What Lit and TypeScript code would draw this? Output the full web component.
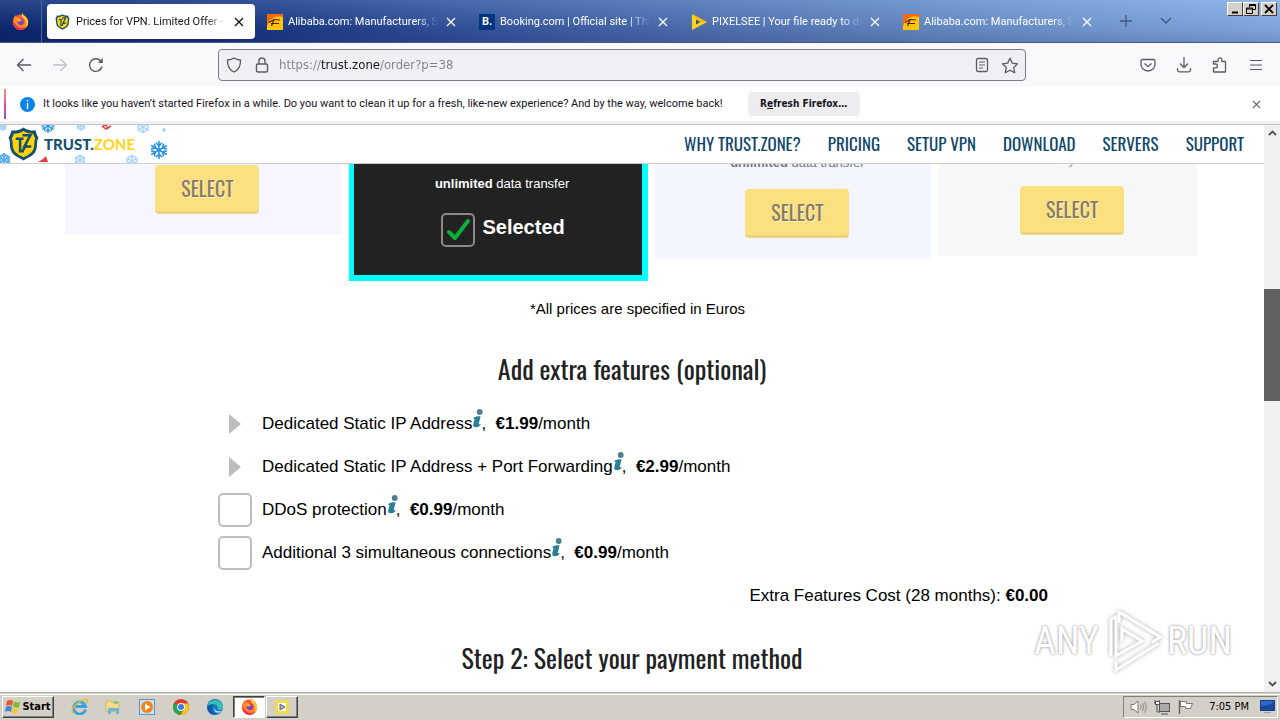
import { LitElement, html, css, svg, nothing } from "lit";
import { customElement } from "lit/decorators.js";
import { classMap } from "lit/directives/class-map.js";

const icon = (w: number, h: number, body: unknown, box = `0 0 ${w} ${h}`) =>
  html`<svg width=${w} height=${h} viewBox=${box} fill="none" aria-hidden="true">${body}</svg>`;

const closeIcon = (s = 10) =>
  icon(s, s, svg`<path d="M1 1 9 9M9 1 1 9" stroke="currentColor" stroke-width="1.3"/>`, "0 0 10 10");

const firefox = (s: number) =>
  icon(s, s, svg`
    <circle cx="8" cy="8.6" r="7.2" fill="#ff4f3a"/>
    <path d="M1.2 7C1.4 4.6 2.6 3 3.6 2.2c0 1 .4 1.6 1 2C6 3.6 7 3.8 8 4.6 6 5 5 6.500 5.200 8.400 5.600 12 10 12.500 11.500 10c1.200-2.200.2-4.200-1.500-5.500C8.500 3 8.800 1.400 9.600.2c.8 1.700 2.600 2.500 3.800 4 1.500 1.700 2 3.800 1.700 5.600-.8 3.800-3.900 6-7.100 6-4 0-7.200-3.200-6.800-8.800z" fill="#ff8a1e"/>
    <path d="M9.600.2c.8 1.700 2.600 2.500 3.800 4 1.500 1.700 2 3.800 1.700 5.600-.3 1.500-1 2.800-2 3.800C14 10 13.500 7 11.500 5.500 9 4 8.800 1.800 9.600.2z" fill="#ffcf3a"/>
    <path d="M1.200 8c.1 5 3.300 7.700 6.800 7.700 2.500 0 4.600-1 5.900-3-2.400 1.900-6.200 2-8.400.2C3.500 11.500 2.700 9.500 1.200 8z" fill="#f5245a"/>
    <circle cx="8.200" cy="8.200" r="2.900" fill="#7a3fd0"/>
    <path d="M4.300 5.800c1.500-.9 3-.6 3.900.2 1 .2 1.700.4 1.800.8-.8.600-2.300.3-2.900 1.500-1.300-.3-2.500-1.200-2.800-2.500z" fill="#ffa52e"/>`,
    "0 0 16 16");

const shieldLogo = (w: number, h: number) =>
  icon(w, h, svg`
    <path d="M16 .5c4 2.800 8.500 3.600 12.500 3 1 4 1.500 5.500 3 7.500-2.500 4-.5 7-2.500 13-2 5.500-7.500 7.500-13 10.500C10.500 31.500 5 29.500 3 24 1 18 3 15 .5 11c1.500-2 2-3.500 3-7.500 4 .6 8.500-.2 12.500-3z" fill="#14506f"/>
    <path d="M16 4c3.500 2.200 6.500 3 10 2.800.4 2 1.200 3.400 2.200 4.800-1.700 3.700-.2 6.500-2 11.400C24.500 27.500 20 29 16 31.300 12 29 7.500 27.500 5.800 23c-1.800-4.900-.3-7.700-2-11.400C4.800 10.200 5.600 8.800 6 6.800 9.500 7 12.500 6.200 16 4z" fill="#ffd20a"/>
    <path d="M8 12h8M12.500 11.500V25h4M15 8.500h8L17 20h7M15.500 24l3.500-6" stroke="#14506f" stroke-width="2.600"/>`,
    "0 0 32 35");

const alibaba = icon(16, 16, svg`
    <path d="M0 0h16v16H0z" fill="#ffc40c"/><path d="M0 0h16v3C10 1 4 3 0 12z" fill="#f26a10"/>
    <path d="M2 8.500 7 5.500l6 .5M4.500 12 7 5.500M4 9.500h8" stroke="#5a1c00" stroke-width="1.200"/>`);

const booking = html`<span class="bk">B.</span>`;

const pixelsee = icon(16, 16, svg`
    <path d="M1 0v16l15-8z" fill="#ffd21c"/><path d="M5 5.500v5l4.500-2.500z" fill="#2e4f92"/><path d="M1 0l15 8H9z" fill="#f3b60e"/>`);

const TABS = [
  { title: "Prices for VPN. Limited Offer - Trust.Zone", fav: shieldLogo(15, 16), active: true },
  { title: "Alibaba.com: Manufacturers, Suppliers", fav: alibaba, active: false },
  { title: "Booking.com | Official site | The best", fav: booking, active: false },
  { title: "PIXELSEE | Your file ready to download", fav: pixelsee, active: false },
  { title: "Alibaba.com: Manufacturers, Suppliers", fav: alibaba, active: false },
];

@customElement("browser-chrome")
class BrowserChrome extends LitElement {
  static styles = css`
    :host { display: block; font: 11px/16px Roboto, "DejaVu Sans Condensed", sans-serif; color: #15141a; }
    button { border: 0; background: none; padding: 0; margin: 0; font: inherit; color: inherit; display: grid; place-items: center; }
    svg { display: block; }
    .tabs { height: 43px; display: flex; box-sizing: border-box;
      background: linear-gradient(rgba(150, 195, 245, .22), rgba(20, 45, 110, .12) 70%, rgba(20, 40, 100, .25)), linear-gradient(90deg, #0a246a, #14307a 17%, #32519a 35%, #5373b3 55%, #7196cd 77%, #8db5e8);
      border-bottom: 1px solid #46598c; }
    .home { width: 42px; box-sizing: border-box; display: grid; place-items: center; border-right: 1px solid #50669c; margin-right: 5px; }
    .strip { display: flex; gap: 4px; padding: 4px 0 3px; min-width: 0; margin-right: 3px; }
    .tab { width: 208px; box-sizing: border-box; display: flex; align-items: center; padding: 0 8px; gap: 5px; color: #fff; border-radius: 4px; min-width: 0; }
    .tab.active { background: #fff; color: #15141a; }
    .fav { width: 16px; flex: none; }
    .bk { display: block; width: 16px; height: 16px; background: #003580; color: #fff; font-weight: bold; text-align: center; }
    .title { flex: 1; white-space: nowrap; overflow: hidden; -webkit-mask-image: linear-gradient(90deg, #000 86%, transparent); mask-image: linear-gradient(90deg, #000 86%, transparent); }
    .close { width: 16px; height: 16px; flex: none; }
    .extra { width: 40px; color: #45557c; }
    .win { margin-left: auto; display: flex; padding: 2px 3px 0 0; align-items: flex-start; }
    .win button { width: 16px; height: 14px; background: #d4d0c8; color: #000; border: 1px solid; border-color: #fff #404040 #404040 #fff; }
    .win button:last-child { margin-left: 2px; }
    .nav { height: 44px; box-sizing: border-box; background: #f9f9fb; display: flex; align-items: center; color: #5b5b66; padding: 0 6px; }
    .nav button { width: 36px; height: 32px; }
    .nav .dim { color: #c0c0c5; }
    .nav .url { flex: 1; margin: 0 104px; display: flex; align-items: center; height: 32px; box-sizing: border-box; border: 1px solid #7c7c88; border-radius: 4px; background: #f0f0f4; padding: 0 1px; }
    .nav .url button { width: 28px; height: 28px; }
    .url input { flex: 1; min-width: 0; border: 0; outline: 0; padding: 0 0 0 3px; height: 20px; font: 13px/20px "DejaVu Sans Condensed", "DejaVu Sans", sans-serif;
      color: transparent; background: linear-gradient(90deg, #80808a 45px, #15141a 45px, #15141a 104px, #80808a 104px); -webkit-background-clip: text; background-clip: text; }
    .note { height: 34px; display: flex; align-items: center; background: #fff; }
    .bar { width: 2px; align-self: stretch; margin: 2px 14px 2px 4px; background: linear-gradient(#f6937a, #e0559b 50%, #8a4fd0); }
    .msg { padding: 0 25px 0 8px; white-space: nowrap; }
    .note .refresh { width: 112px; height: 24px; background: #ededf0; border-radius: 4px; font: bold 10px/24px "DejaVu Sans Condensed", "DejaVu Sans", sans-serif; display: block; }
    .note .x { margin: 0 16px 0 auto; width: 16px; height: 16px; color: #5b5b66; }
    .edge { height: 3px; background: #f0f0f2; border-bottom: 1px solid #c4c4c8; }
  `;
  render() {
    const s = "currentColor";
    return html`
      <div class="tabs">
        <div class="home">${firefox(17)}</div>
        <div class="strip">
          ${TABS.map((t) => html`<div class=${classMap({ tab: true, active: t.active })}>
            <span class="fav">${t.fav}</span><span class="title">${t.title}</span>
            <button class="close" aria-label="Close tab">${closeIcon(10)}</button></div>`)}
        </div>
        <button class="extra" aria-label="New tab">${icon(12, 12, svg`<path d="M6 0v12M0 6h12" stroke=${s} stroke-width="1.300"/>`)}</button>
        <button class="extra" aria-label="List tabs">${icon(12, 8, svg`<path d="m1 1 5 5 5-5" stroke=${s} stroke-width="1.400"/>`)}</button>
        <div class="win">
          <button aria-label="Minimize">${icon(10, 10, svg`<path d="M2 8.500h6" stroke="#000" stroke-width="2"/>`)}</button>
          <button aria-label="Restore">${icon(10, 10, svg`<path d="M3.500 3V.500h6v5H7M3 1.500h7M.500 4h6v5.500h-6zM0 5h7" stroke="#000"/>`)}</button>
          <button aria-label="Close">${icon(10, 10, svg`<path d="m1 1 8 8M9 1 1 9" stroke="#000" stroke-width="1.800"/>`)}</button>
        </div>
      </div>
      <div class="nav">
        <button aria-label="Back">${icon(16, 14, svg`<path d="M15 7H2M7.500 1 1.500 7l6 6" stroke=${s} stroke-width="1.400"/>`)}</button>
        <button class="dim" aria-label="Forward">${icon(16, 14, svg`<path d="M1 7h13M8.500 1l6 6-6 6" stroke=${s} stroke-width="1.400"/>`)}</button>
        <button aria-label="Reload">${icon(16, 16, svg`<path d="M14 9.500A6.300 6.300 0 1 1 12.500 3.800L14 5.300" stroke=${s} stroke-width="1.400"/><path d="M14.800 1v5H9.800z" fill=${s}/>`)}</button>
        <div class="url">
          <button aria-label="Tracking protection">${icon(16, 16, svg`<path d="M8 1c2 1.300 4 1.800 6.500 2 .2 5.500-1.500 9.800-6.500 12C3 12.800 1.300 8.500 1.500 3 4 2.800 6 2.300 8 1z" stroke=${s} stroke-width="1.300"/>`)}</button>
          <button aria-label="Site security">${icon(14, 16, svg`<path d="M2.500 7h9q1 0 1 1v5.500q0 1.500-1.500 1.500H3q-1.500 0-1.500-1.500V8q0-1 1-1zM4 7V4a3 3 0 0 1 6 0v3" stroke=${s} stroke-width="1.400"/>`)}</button>
          <input aria-label="Address" value="https://trust.zone/order?p=38" />
          <button aria-label="Reader view">${icon(14, 16, svg`<rect x="1.500" y="1.500" width="11" height="13" rx="1.500" stroke=${s} stroke-width="1.300"/><path d="M4 5h6M4 8h6M4 11h4" stroke=${s}/>`)}</button>
          <button aria-label="Bookmark">${icon(18, 17, svg`<path d="m9 1.200 2.300 4.900 5.300.7-3.900 3.700 1 5.300L9 13.200l-4.700 2.600 1-5.300L1.400 6.800l5.300-.7z" stroke=${s} stroke-width="1.300" stroke-linejoin="round"/>`)}</button>
        </div>
        <button aria-label="Pocket">${icon(16, 14, svg`<path d="M2.500 1.500h11q1.500 0 1.500 1.500v3.500a7 6.500 0 0 1-14 0V3q0-1.500 1.500-1.500z" stroke=${s} stroke-width="1.300"/><path d="m4.500 5.500 3.500 3 3.500-3" stroke=${s} stroke-width="1.300"/>`)}</button>
        <button aria-label="Downloads">${icon(16, 16, svg`<path d="M8 0v10M4 6.500 8 10.500l4-4M1.500 11v2q0 1.800 1.800 1.800h9.400q1.800 0 1.800-1.800v-2" stroke=${s} stroke-width="1.300"/>`)}</button>
        <button aria-label="Extensions">${icon(16, 16, svg`<path d="M1.500 15V10.800H3.500a1.900 1.900 0 0 0 0-3.800H1.500V4.500H6V2.800a1.900 1.900 0 0 1 3.800 0V4.500h3.700v10.500z" stroke=${s} stroke-width="1.300" stroke-linejoin="round"/>`)}</button>
        <button aria-label="Menu">${icon(14, 12, svg`<path d="M1 1.500h12M1 6h12M1 10.500h12" stroke=${s} stroke-width="1.200"/>`)}</button>
      </div>
      <div class="note">
        <div class="bar"></div>
        ${icon(15, 15, svg`<circle cx="7.500" cy="7.500" r="7.500" fill="#0a84e8"/><path d="M7.500 6v6M7.500 3v1.600" stroke="#fff" stroke-width="1.400"/>`)}
        <span class="msg">It looks like you haven’t started Firefox in a while. Do you want to clean it up for a fresh, like-new experience? And by the way, welcome back!</span>
        <button class="refresh">R<u>e</u>fresh Firefox…</button>
        <button class="x" aria-label="Dismiss">${closeIcon(9)}</button>
      </div>
      <div class="edge"></div>`;
  }
}

const flake = (x: number, y: number, r: number, c: string, w = 1.3) => {
  const arms = [0, 60, 120, 180, 240, 300].map((a) => svg`<path transform="rotate(${a})" d="M0 0V${-r}M0 ${-r * 0.45}L${-r * 0.35} ${-r * 0.8}M0 ${-r * 0.45}L${r * 0.35} ${-r * 0.8}"/>`);
  return svg`<g transform="translate(${x} ${y})" stroke=${c} stroke-width=${w}>${arms}</g>`;
};

const check = svg`<path d="m8 19 6 6L27 8" stroke="#0fae3c" stroke-width="4" stroke-linecap="round" stroke-linejoin="round"/>`;

const infoIcon = icon(11, 19, svg`
  <circle cx="7.700" cy="3" r="2.900" fill="#4d7f8e"/>
  <path d="M1 9.200C3 7.500 6 7 8.600 7.300L6.800 14.600c-.2 1 .6.900 2.200.1-.9 2.400-2.800 3.600-5 3.600-2.400 0-3.200-1.200-2.700-3.200L2.600 10z" fill="#2b8098"/>`);

const NAV = ["WHY TRUST.ZONE?", "PRICING", "SETUP VPN", "DOWNLOAD", "SERVERS", "SUPPORT"];
const FEATURES = [
  { name: "Dedicated Static IP Address", price: "€1.99", box: false },
  { name: "Dedicated Static IP Address + Port Forwarding", price: "€2.99", box: false },
  { name: "DDoS protection", price: "€0.99", box: true },
  { name: "Additional 3 simultaneous connections", price: "€0.99", box: true },
];

@customElement("order-page")
class OrderPage extends LitElement {
  static styles = css`
    :host { display: flex; background: #fff; color: #000; font: 16px/20px "Liberation Sans", Arial, sans-serif; min-height: 0; overflow: hidden; position: relative; }
    svg { display: block; }
    .page { flex: 1; min-width: 0; overflow: hidden; }
    .sel, h2, header nav { font-family: Oswald, "Liberation Sans Narrow", sans-serif; }
    header { height: 38px; border-bottom: 1px solid #cfcfcf; display: flex; justify-content: space-between; align-items: center; }
    .brand { display: grid; width: 170px; height: 38px; overflow: hidden; }
    .brand > * { grid-area: 1 / 1; }
    .name { display: flex; align-items: center; gap: 5px; padding-left: 8px; font: 900 15px/20px Lato, sans-serif; color: #14506f; text-decoration: none; }
    .name b { color: #ffd62b; font-weight: 900; }
    header nav { display: flex; gap: 27px; padding-right: 20px; font-size: 17px; white-space: nowrap; }
    header nav a { color: #0f476a; text-decoration: none; }
    .plans { display: grid; grid-template-columns: 277fr 300fr 276fr 260fr; align-items: start; gap: 7px; padding: 0 66px 0 65px; }
    .plan { overflow: hidden; box-sizing: border-box; display: flex; flex-direction: column; justify-content: flex-end; align-items: center; font-size: 13px; line-height: 16px; color: #777; gap: 18px; padding: 0 0 21px 8px; }
    .p1 { height: 70px; background: #f6f6fe; padding-bottom: 20px; }
    .p2 { height: 117px; background: #222; border: solid #0ff; border-width: 0 6px 6px 5px; color: #fff; padding-bottom: 28px; gap: 21px; }
    .p3 { height: 95px; background: #f4f6ff; }
    .p4 { height: 92px; background: #f7f7f8; }
    .red { color: #d88; }
    .sel { width: 104px; height: 49px; flex: none; border: 0; border-bottom: 3px solid #ecd284; border-radius: 4px; background: #fbe080; color: #857a68; font-size: 20px; text-shadow: 1px 1px 0 #fff3c4; padding: 0; }
    .pick { display: flex; gap: 7px; font-size: 20px; line-height: 28px; font-weight: bold; padding-left: 2px; }
    .tick { display: grid; flex: none; }
    .tick > * { grid-area: 1 / 1; }
    input { appearance: none; width: 34px; height: 34px; margin: 0; box-sizing: border-box; border: 2px solid #bdbdbd; border-radius: 5px; background: #fff; }
    .pick input { border-color: #8c8787; background: #222; }
    .fine { margin: 19px 0 0; padding-left: 11px; text-align: center; font-size: 15px; line-height: 18px; }
    h2 { margin: 0; text-align: center; font-weight: 400; font-size: 26px; line-height: 36px; color: #222; }
    .extras { padding-top: 33px; }
    .list { max-width: 830px; margin: 15px auto 0; padding-left: 2px; }
    .row { height: 43px; display: flex; align-items: center; gap: 10px; white-space: nowrap; }
    .mark { width: 34px; flex: none; display: grid; place-items: center; }
    .label { display: flex; align-items: center; font-size: 17px; }
    .label svg { margin-top: -10px; }
    .label .price { margin-left: -2px; }
    .total { justify-content: flex-end; }
    .pay { padding-top: 23px; }
    .scroll { width: 16px; background: #f0f0f0; display: flex; flex-direction: column; align-items: center; flex: none; padding: 5px 0; box-sizing: border-box; }
    .scroll .up { height: 159px; flex: none; }
    .thumb { width: 16px; height: 112px; background: #606060; margin-bottom: auto; }
    .mark-any { position: absolute; right: 48px; bottom: 19px; display: flex; align-items: center; gap: 4px; font: 38px/64px "Liberation Sans Narrow", "Roboto Condensed", sans-serif; color: #fff; text-shadow: 0 0 3px #999, 0 0 2px #ccc; }
    .mark-any svg { filter: drop-shadow(0 0 2px #aaa); }
  `;
  render() {
    return html`
      <div class="page">
        <header>
          <div class="brand">
            ${icon(170, 38, svg`
              ${flake(159, 25, 9, "#2b93e0", 1.6)}${flake(48, 1, 7, "#2b93e0")}${flake(143, 2, 7, "#a9d6f5")}${flake(81, 1, 5, "#a9d6f5")}
              ${flake(4, 35, 7, "#5cb0ee", 2)}${flake(80, 35, 6, "#a9d6f5")}${flake(132, 36, 7, "#a9d6f5")}${flake(164, 5, 2, "#a9d6f5")}${flake(3, 2, 4, "#a9d6f5")}
              <path d="m102 1 4 3 5-3M103 1l3-1 2 4" stroke="#e04040" stroke-width="1.500"/><path d="m38 37 5-3 3-3 2 6z" fill="#e04040"/>
            `)}
            <a class="name" href="#">${shieldLogo(31, 34)}<span>TRUST.<b>ZONE</b></span></a>
          </div>
          <nav>${NAV.map((n) => html`<a href="#">${n}</a>`)}</nav>
        </header>
        <section class="plans">
          <div class="plan p1"><button class="sel">SELECT</button></div>
          <div class="plan p2"><span><b>unlimited</b> data transfer</span>
            <label class="pick"><span class="tick"><input type="checkbox" checked />${icon(34, 34, check)}</span>Selected</label></div>
          <div class="plan p3"><span><b>unlimited</b> data transfer</span><button class="sel">SELECT</button></div>
          <div class="plan p4"><span class="red">y</span><button class="sel">SELECT</button></div>
        </section>
        <p class="fine">*All prices are specified in Euros</p>
        <section class="extras">
          <h2>Add extra features (optional)</h2>
          <div class="list">
            ${FEATURES.map((f, i) => html`<div class="row">
              <span class="mark">${f.box
                ? html`<input type="checkbox" id="f${i}" />`
                : icon(12, 20, svg`<path d="M0 0v20l12-10z" fill="#bdbdbd"/>`)}</span>
              <label class="label" for=${f.box ? `f${i}` : nothing}><span>${f.name}</span>${infoIcon}<span class="price">,&nbsp; <b>${f.price}</b>/month</span></label>
            </div>`)}
            <div class="row total"><span class="label">Extra Features Cost (28 months):&nbsp; <b>€0.00</b></span></div>
          </div>
        </section>
        <section class="pay"><h2>Step 2: Select your payment method</h2></section>
      </div>
      <div class="scroll">
        <div class="up">${icon(9, 6, svg`<path d="m1 5 3.500-3.500L8 5" stroke="#505050" stroke-width="1.800"/>`)}</div>
        <div class="thumb"></div>
        ${icon(9, 6, svg`<path d="m1 1 3.500 3.500L8 1" stroke="#505050" stroke-width="1.800"/>`)}
      </div>
      <div class="mark-any"><span>ANY</span>${icon(60, 64, svg`
        <path d="M16 14V3l41 25-8 6" stroke="#fff" stroke-width="3"/><path d="M8 47V10l5-2v39l26-15-20-12v12" stroke="#fff" stroke-width="3"/><path d="M13 53v8l43-27" stroke="#fff" stroke-width="3"/>`)}<span>RUN</span></div>`;
  }
}

@customElement("task-bar")
class TaskBar extends LitElement {
  static styles = css`
    :host { display: flex; align-items: center; height: 23px; background: #d4d0c8; border-top: 1px solid #fff; box-shadow: 0 -1px #d4d0c8, 0 -2px #b4b1ab; font: 11px/16px "DejaVu Sans Condensed", "DejaVu Sans", sans-serif; color: #000; padding: 0 2px 2px; margin-top: 2px; }
    svg { display: block; }
    button { border: 0; background: none; padding: 0; font: inherit; height: 22px; display: flex; align-items: center; justify-content: center; box-sizing: border-box; }
    .start, .app { background: #d4d0c8; border: 1px solid; border-color: #fff #404040 #404040 #fff; box-shadow: inset -1px -1px #808080; }
    .start { width: 52px; font-weight: bold; gap: 1px; margin-right: 8px; }
    .quick { width: 34px; }
    .app { width: 32px; margin-left: 1px; }
    .app.on { background: #fff; border-color: #404040 #fff #fff #404040; box-shadow: inset 1px 1px #808080; }
    .tray { margin-left: auto; height: 22px; box-sizing: border-box; display: flex; align-items: center; gap: 7px; padding: 0 2px 0 6px; border: 1px solid; border-color: #808080 #fff #fff #808080; white-space: nowrap; }
    .clock { padding: 0 4px 0 8px; }
  `;
  render() {
    return html`
      <button class="start">${icon(16, 15, svg`
        <path d="M2 2q3-2 6 0L7 7Q4 5 1 7z" fill="#e8542a"/><path d="M9 2.500q3 2 6 .3L14 8q-3 1.500-6-.5z" fill="#7cb83c"/>
        <path d="M1 8q3-2 6 0l-1 5q-3-2-6 0z" fill="#3f86d8"/><path d="M7.500 8.500q3 2 6 .3l-1 5q-3 1.500-6-.5z" fill="#f8c62e"/>`)}Start</button>
      <button class="quick" aria-label="Internet Explorer">${icon(17, 17, svg`
        <path d="M14.500 11.500A6 6 0 1 1 14.500 8.500H4.500" stroke="#3ba3dc" stroke-width="2.800"/><path d="M1.500 15.500C-1 12 8 1 15.500 1.500 17 2 15.500 5 15 6" stroke="#e8b93a" stroke-width="1.400"/>`)}</button>
      <button class="quick" aria-label="Explorer">${icon(16, 16, svg`
        <path d="M1 3q0-1 1-1h4l1 1.500h7v9H1z" fill="#f3dd8a" stroke="#d5b860"/><path d="M3 9h11v6h-3v-3H6v3H3z" fill="#6fb4dd"/><path d="M9 2h4v3H9z" fill="#8cc97a"/>`)}</button>
      <button class="quick" aria-label="Media Player">${icon(16, 16, svg`
        <rect x=".5" y=".5" width="15" height="15" fill="#cfe3f5" stroke="#5b93c8"/><circle cx="8" cy="8" r="6" fill="#f28416"/><path d="M6 4.500v7l5.500-3.500z" fill="#fff"/>`)}</button>
      <button class="quick" aria-label="Chrome">${icon(16, 16, svg`
        <circle cx="8" cy="8" r="8" fill="#e0392c"/><path d="M1 4a8 8 0 0 0 6 12l4-6.500z" fill="#2da44f"/><path d="M15 4.500A8 8 0 0 1 7.500 16l4-6.500L10 4.500z" fill="#fbc916"/>
        <circle cx="8" cy="8" r="3.900" fill="#fff"/><circle cx="8" cy="8" r="3" fill="#3b7ded"/>`)}</button>
      <button class="quick" aria-label="Edge">${icon(16, 16, svg`
        <circle cx="8" cy="8" r="8" fill="#1277c9"/><path d="M.3 7A8 8 0 0 1 16 8c0 3-3.500 3.500-5.500 2.500 1-1.500.3-5-3.500-5C4 5.500 1 6.500.3 7z" fill="#36c3b0"/>
        <path d="M.2 9C1 5.500 4.500 4.800 7 5.500 4 7 4 13 9 15.900 4 16.300.5 13 .2 9z" fill="#0f5aa8"/><path d="M7.500 8c-.8 3 2.500 5.500 7 3.800l-1.500 1.700C9 14.500 6 11.500 7.500 8z" fill="#d4e9ef"/>`)}</button>
      <button class="app on" aria-label="Firefox">${firefox(17)}</button>
      <button class="app" aria-label="Pixelsee">${icon(14, 14, svg`
        <rect x="1.500" y="1.500" width="11" height="11" fill="#fff" stroke="#f2dc4a" stroke-width="3"/><path d="M5 4v6l5-3z" fill="#aab" stroke="#667"/>`)}</button>
      <div class="tray">
        ${icon(17, 14, svg`<path d="M1 4.500h3L8 1v12L4 9.500H1z" fill="#fff" stroke="#777"/><path d="M10.500 4.500q1.500 2.500 0 5M12.500 3q2.500 4 0 8M14.500 1.500q3.500 5.500 0 11" stroke="#888"/>`)}
        ${icon(17, 16, svg`<rect x="5.500" y="4.500" width="10" height="8" fill="#aaa" stroke="#555"/><path d="M7 15h7M1 1v4h4V1M3 5v8h3M2 2v3h3V2" stroke="#555"/><rect x="1.500" y="2.500" width="4" height="3" fill="#fff" stroke="#555"/>`)}
        ${icon(16, 16, svg`<path d="M1.500 1v14" stroke="#666" stroke-width="1.500"/><path d="M2.500 2.500h6v2h6l-2 5h-5v-2h-5z" fill="#fff" stroke="#777"/>`)}
        <span class="clock">7:05 PM</span>
        ${icon(15, 13, svg`<rect x=".5" y=".5" width="14" height="10" fill="#2a6cc8" stroke="#1b3f80"/><path d="M1 6q7 0 13-4v8H1z" fill="#174a9c"/><path d="M4 12.500h7" stroke="#8ab"/>`)}
      </div>`;
  }
}

@customElement("app-root")
class AppRoot extends LitElement {
  static styles = css`
    :host { display: flex; flex-direction: column; height: 100vh; overflow: hidden; background: #fff; }
    order-page { flex: 1; }
    browser-chrome, task-bar { flex: none; }
  `;
  render() {
    return html`<browser-chrome></browser-chrome><order-page></order-page><task-bar></task-bar>`;
  }
}
